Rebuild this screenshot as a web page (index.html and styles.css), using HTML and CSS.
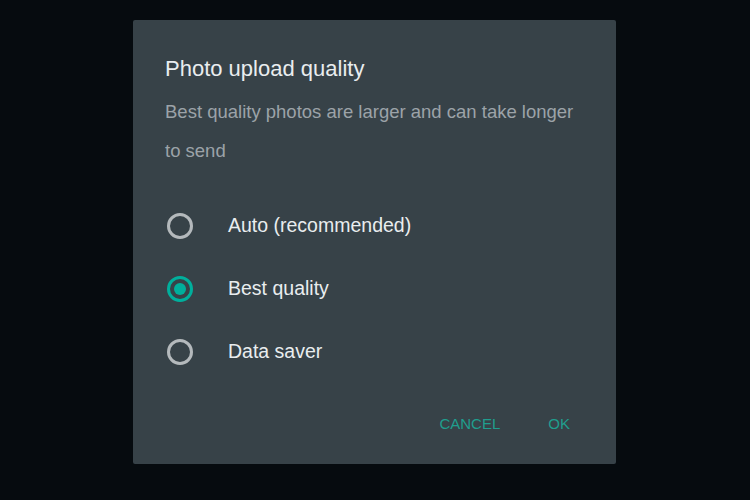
FILE: index.html
```html
<!DOCTYPE html>
<html lang="en">
<head>
    <meta charset="UTF-8">
    <meta name="viewport" content="width=device-width, initial-scale=1.0">
    <title>Photo upload quality</title>
    <link rel="stylesheet" href="styles.css">
</head>
<body>
    <div class="dialog">
        <h1 class="dialog-title">Photo upload quality</h1>
        <p class="dialog-text">Best quality photos are larger and can take longer to send</p>
        <div class="options">
            <label class="option">
                <span class="radio"></span>
                <span class="option-label">Auto (recommended)</span>
            </label>
            <label class="option">
                <span class="radio checked"></span>
                <span class="option-label">Best quality</span>
            </label>
            <label class="option">
                <span class="radio"></span>
                <span class="option-label">Data saver</span>
            </label>
        </div>
        <div class="actions">
            <button class="action">Cancel</button>
            <button class="action">OK</button>
        </div>
    </div>
</body>
</html>
```

FILE: styles.css
```css
body {
    margin: 0;
    background-color: #060b0f;
    font-family: "Liberation Sans", Arial, sans-serif;
    padding: 20px 0 0 133px;
}
.dialog {
    width: 483px;
    height: 444px;
    box-sizing: border-box;
    background-color: #374248;
    border-radius: 2px;
    padding: 37px 46px 0 32px;
}
.dialog-title {
    margin: 0;
    font-size: 22px;
    font-weight: normal;
    line-height: 24px;
    color: #e9edef;
}
.dialog-text {
    margin: 11px 0 0 0;
    font-size: 18.5px;
    line-height: 39px;
    color: #9ca3a8;
    width: 416px;
}
.options {
    margin-top: 24px;
    display: flex;
    flex-direction: column;
}
.option {
    height: 63px;
    display: flex;
    align-items: center;
    cursor: pointer;
}
.radio {
    width: 20px;
    height: 20px;
    margin-left: 2px;
    border: 3px solid #b4b9bc;
    border-radius: 50%;
    display: flex;
    align-items: center;
    justify-content: center;
    flex-shrink: 0;
}
.radio.checked {
    border-color: #00af9c;
}
.radio.checked::after {
    content: "";
    width: 12px;
    height: 12px;
    border-radius: 50%;
    background-color: #00af9c;
}
.option-label {
    margin-left: 35px;
    font-size: 19.5px;
    color: #e9edef;
}
.actions {
    margin-top: 22px;
    display: flex;
    justify-content: flex-end;
    gap: 48px;
}
.action {
    background: none;
    border: none;
    padding: 0;
    height: 36px;
    font-family: inherit;
    font-size: 15px;
    text-transform: uppercase;
    color: #1f9e8e;
    cursor: pointer;
}
```
